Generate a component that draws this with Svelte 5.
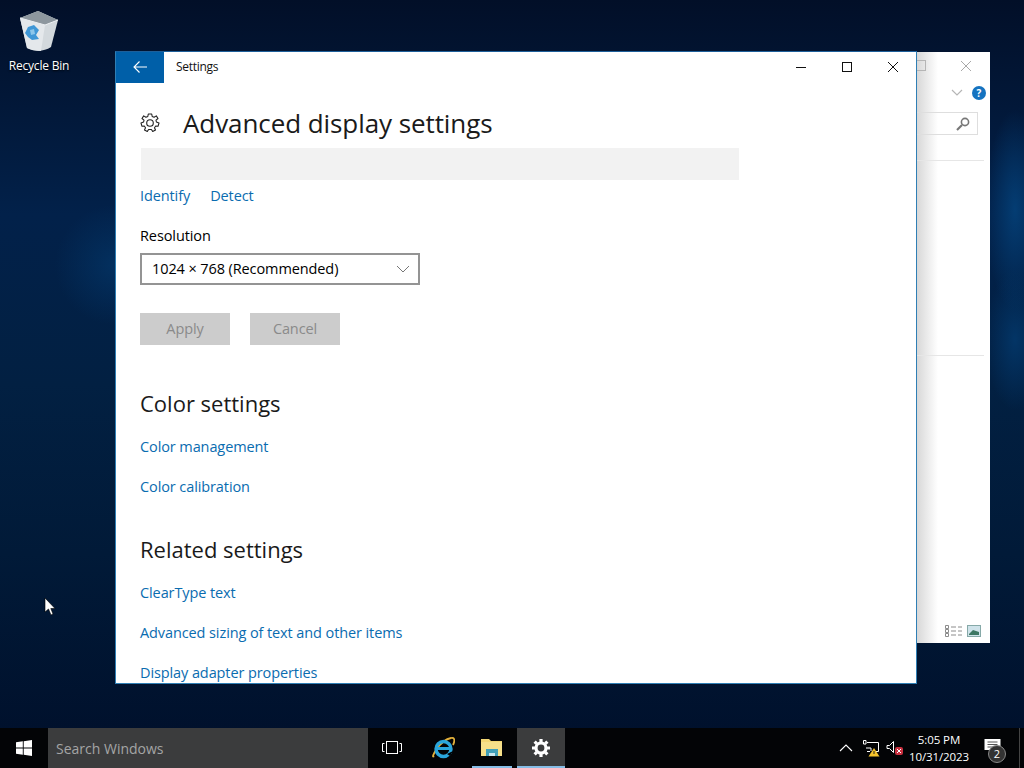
<script>
  const colorLinks = ["Color management", "Color calibration"];
  const relatedLinks = ["ClearType text", "Advanced sizing of text and other items", "Display adapter properties"];
</script>

<div class="desktop">
  <div class="desktop-icon">
    <svg width="44" height="44" viewBox="0 0 44 44">
      <path d="M3 9 L21 2 L41 11 L34 38 Q23 45 10 39 Z" fill="#d3d9dd" />
      <path d="M3 9 L21 2 L41 11 L28 16 Z" fill="#8d979e" />
      <path d="M3 9 L28 16 L41 11" stroke="#eef1f3" fill="none" />
      <path d="M28 16 L24 42 Q15 42 10 39 L3 9 Z" fill="#e4e8eb" />
      <path d="M11 18 L17 16 L22 21 L19 26 L22 30 L15 31 L11 28 L8 24 Z" fill="#3f97d6" />
      <path d="M13 21 L17 20 L18 25 L14 26 Z" fill="#8cc6ea" />
    </svg>
    <span>Recycle Bin</span>
  </div>

  <div class="back-window">
    <div class="back-shadow"></div>
    <div class="back-controls">
      <span class="back-max"></span>
      <svg class="back-close" width="12" height="12" viewBox="0 0 12 12"><path d="M1 1 L11 11 M11 1 L1 11" stroke="#a9a9a9" fill="none" /></svg>
    </div>
    <div class="back-ribbon">
      <svg width="12" height="8" viewBox="0 0 12 8"><path d="M1 1 L6 6 L11 1" stroke="#b5b5b5" stroke-width="1.2" fill="none" /></svg>
      <span class="help">?</span>
    </div>
    <div class="back-search">
      <svg width="16" height="16" viewBox="0 0 16 16"><circle cx="10" cy="6" r="3.6" stroke="#777" stroke-width="1.6" fill="none" /><path d="M7 9 L2 14" stroke="#777" stroke-width="2.2" /></svg>
    </div>
    <div class="back-rule one"></div>
    <div class="back-rule two"></div>
    <div class="back-views">
      <svg width="18" height="12" viewBox="0 0 18 12">
        <path d="M.5 .5h3v3h-3zM.5 4.500h3v3h-3zM.5 8.500h3v3h-3z" stroke="#8c8c8c" fill="#fff" />
        <path d="M6 2h5M13 2h4M6 6h5M13 6h4M6 10h5M13 10h4" stroke="#8c8c8c" />
      </svg>
      <svg width="14" height="12" viewBox="0 0 14 12">
        <rect x=".5" y=".5" width="13" height="11" fill="#cfe3ea" stroke="#86a9a8" />
        <path d="M2 9 L6 5 L12 7 V10 H2 Z" fill="#3d7763" />
      </svg>
    </div>
  </div>

  <div class="window">
    <header class="titlebar">
      <button class="back" aria-label="Back">
        <svg width="16" height="14" viewBox="0 0 16 14"><path d="M15 7 H2 M7.500 1.500 L2 7 L7.500 12.500" stroke="#fff" stroke-width="1.100" fill="none" /></svg>
      </button>
      <span class="app-title">Settings</span>
      <div class="controls">
        <span class="ctl"><svg width="12" height="12" viewBox="0 0 12 12"><path d="M1 6.500 H11" stroke="#111" /></svg></span>
        <span class="ctl"><svg width="12" height="12" viewBox="0 0 12 12"><rect x="1.500" y="1.500" width="9" height="9" stroke="#111" fill="none" /></svg></span>
        <span class="ctl"><svg width="12" height="12" viewBox="0 0 12 12"><path d="M1 1 L11 11 M11 1 L1 11" stroke="#111" fill="none" /></svg></span>
      </div>
    </header>

    <main class="page">
      <div class="page-head">
        <svg width="20" height="20" viewBox="0 0 20 20">
          <path d="M8.300 1 H11.700 L12.200 3.500 L14.100 4.300 L16.300 2.900 L18 5.500 L16 7.100 L16.400 9 L19 10 L18 13.300 L15.700 13 L14.500 14.700 L15.500 17 L12.700 18.500 L11.400 16.500 L8.600 16.500 L7.300 18.500 L4.500 17 L5.500 14.700 L4.300 13 L2 13.300 L1 10 L3.600 9 L4 7.100 L2 5.500 L3.700 2.900 L5.900 4.300 L7.800 3.500 Z" stroke="#222" stroke-width="1.100" fill="none" stroke-linejoin="round" />
          <circle cx="10" cy="10" r="3.300" stroke="#222" stroke-width="1.100" fill="none" />
        </svg>
        <h1>Advanced display settings</h1>
      </div>

      <div class="monitor-strip"></div>

      <div class="link-row">
        <a href="#identify">Identify</a>
        <a href="#detect">Detect</a>
      </div>

      <div class="field-label">Resolution</div>
      <div class="select">
        <span>1024 × 768 (Recommended)</span>
        <svg width="14" height="8" viewBox="0 0 14 8"><path d="M1 1 L7 7 L13 1" stroke="#777" fill="none" /></svg>
      </div>

      <div class="buttons">
        <button disabled>Apply</button>
        <button disabled>Cancel</button>
      </div>

      <h2 class="first">Color settings</h2>
      {#each colorLinks as link}
        <a class="link" href="#color">{link}</a>
      {/each}

      <h2>Related settings</h2>
      {#each relatedLinks as link}
        <a class="link" href="#related">{link}</a>
      {/each}
    </main>
  </div>

  <svg class="cursor" width="12" height="19" viewBox="0 0 12 19">
    <path d="M1 1 V15 L4.500 12 L7 18 L9 17 L6.800 11.500 H11 Z" fill="#fff" stroke="#000" stroke-width=".6" />
  </svg>

  <footer class="taskbar">
    <div class="start">
      <svg width="16" height="16" viewBox="0 0 16 16"><path d="M0 2.300 L6.800 1.300 V7.500 H0 Z M7.700 1.200 L16 0 V7.500 H7.700 Z M0 8.400 H6.800 V14.700 L0 13.700 Z M7.700 8.400 H16 V16 L7.700 14.800 Z" fill="#fff" /></svg>
    </div>
    <div class="search">Search Windows</div>
    <div class="task-item">
      <svg width="20" height="14" viewBox="0 0 20 14">
        <rect x="4.500" y=".5" width="11" height="12" stroke="#fff" fill="none" />
        <path d="M2.500 2.500 H.5 V10.500 H2.500 M17.500 2.500 H19.500 V10.500 H17.500" stroke="#fff" fill="none" />
      </svg>
    </div>
    <div class="task-item ie">
      <svg width="24" height="24" viewBox="0 0 24 24">
        <path d="M3 20 C-1 24 8 4 20 2 C24 1 24 5 22 9" stroke="#e3b13c" stroke-width="1.800" fill="none" />
        <circle cx="12.500" cy="13" r="7.500" fill="none" stroke="#2aa6dc" stroke-width="3.400" />
        <path d="M5.500 12.500 H20" stroke="#2aa6dc" stroke-width="3" />
        <path d="M16 18 L22 15 L19 20 Z" fill="#000" />
      </svg>
    </div>
    <div class="task-item open folder">
      <svg width="22" height="20" viewBox="0 0 22 20">
        <path d="M0 1 H8 L10 3 H21 V18 H0 Z" fill="#f3d774" />
        <path d="M0 4 H21 V18 H0 Z" fill="#f6e08a" />
        <path d="M5 18 V11 H17 V18 Z" fill="#41a0b8" />
        <path d="M8 15 H14 V18 H8 Z" fill="#cbe6ec" />
      </svg>
    </div>
    <div class="task-item open active">
      <svg width="20" height="20" viewBox="0 0 20 20">
        <circle cx="10" cy="10" r="5" fill="none" stroke="#fff" stroke-width="3.200" />
        <path d="M10 1 V4 M10 16 V19 M1 10 H4 M16 10 H19 M3.600 3.600 L5.700 5.700 M14.300 14.300 L16.400 16.400 M3.600 16.400 L5.700 14.300 M14.300 5.700 L16.400 3.600" stroke="#fff" stroke-width="3.200" />
      </svg>
    </div>

    <div class="tray">
      <svg class="chev" width="14" height="8" viewBox="0 0 14 8"><path d="M1 7 L7 1 L13 7" stroke="#fff" stroke-width="1.100" fill="none" /></svg>
      <svg class="net" width="18" height="18" viewBox="0 0 18 18">
        <path d="M1.500 1.500 H4 V5 H1.500 Z M5 3.500 H16.500 V12.500 H11 M8 12.500 H5 M4 9 H9 V12" stroke="#fff" fill="none" />
        <path d="M12 9 L17.500 17.500 H6.500 Z" fill="#f5c32c" />
        <path d="M12 12 V15" stroke="#222" />
      </svg>
      <svg class="vol" width="18" height="16" viewBox="0 0 18 16">
        <path d="M1 5.500 H3.500 L7.500 1.500 V12.500 L3.500 8.500 H1 Z" stroke="#fff" fill="none" />
        <rect x="9" y="7" width="8" height="8" rx="2" fill="#c9303f" />
        <path d="M11 9 L15 13 M15 9 L11 13" stroke="#fff" />
      </svg>
      <div class="clock">
        <span>5:05 PM</span>
        <span>10/31/2023</span>
      </div>
      <div class="notify">
        <svg width="17" height="15" viewBox="0 0 16 15">
          <path d="M0 0 H16 V11 H8 L5 14 V11 H0 Z" fill="#fff" />
          <path d="M3 3 H13 M3 5.500 H13 M3 8 H13" stroke="#555" />
        </svg>
        <span class="badge">2</span>
      </div>
      <div class="show-desktop"></div>
    </div>
  </footer>
</div>

<style>
  :global(body) {
    margin: 0;
    font-family: "Open Sans", "Noto Sans", sans-serif;
  }

  .desktop {
    position: relative;
    width: 1024px;
    height: 768px;
    overflow: hidden;
    background:
      radial-gradient(ellipse 60px 60px at 115px 265px, #03305f 0%, rgba(3, 48, 95, 0) 100%),
      radial-gradient(ellipse 30px 100px at 1015px 210px, #043d73 0%, rgba(4, 61, 115, 0) 100%),
      radial-gradient(ellipse 30px 70px at 1015px 340px, #033566 0%, rgba(3, 53, 102, 0) 100%),
      linear-gradient(180deg, #020f28 0%, #02214a 28%, #022042 50%, #011a38 72%, #000f2a 100%);
  }

  /* desktop icon */
  .desktop-icon {
    position: absolute;
    left: 0;
    top: 9px;
    width: 78px;
    display: flex;
    flex-direction: column;
    align-items: center;
    color: #fff;
    font-size: 12px;
    line-height: 16px;
  }

  .desktop-icon span {
    margin-top: 5px;
    letter-spacing: -0.2px;
    text-shadow: 0 1px 2px #000;
  }

  /* window behind */
  .back-window {
    position: absolute;
    left: 900px;
    top: 52px;
    width: 90px;
    height: 591px;
    background: #fff;
  }

  .back-shadow {
    position: absolute;
    left: 16px;
    top: 0;
    bottom: 0;
    width: 22px;
    background: linear-gradient(90deg, #d6d6d6, #ffffff);
  }

  .back-controls {
    position: absolute;
    left: 16px;
    top: 8px;
    width: 58px;
    height: 12px;
  }

  .back-max {
    position: absolute;
    left: 0;
    top: 0;
    width: 9px;
    height: 9px;
    border: 1px solid #b5b5b5;
    border-left: none;
  }

  .back-close {
    position: absolute;
    right: 2px;
    top: 0;
  }

  .back-ribbon {
    position: absolute;
    left: 51px;
    top: 34px;
    display: flex;
    align-items: center;
    gap: 9px;
  }

  .help {
    width: 14px;
    height: 14px;
    border-radius: 50%;
    background: #1573c0;
    color: #fff;
    font-size: 10px;
    font-weight: 700;
    line-height: 14px;
    text-align: center;
  }

  .back-search {
    position: absolute;
    left: 16px;
    top: 60px;
    width: 55px;
    height: 21px;
    border: 1px solid #dedede;
    border-left: none;
    display: flex;
    justify-content: flex-end;
    align-items: center;
    padding-right: 6px;
  }

  .back-rule {
    position: absolute;
    left: 16px;
    width: 68px;
    height: 1px;
    background: #e6e6e6;
  }

  .back-rule.one {
    top: 108px;
  }

  .back-rule.two {
    top: 303px;
  }

  .back-views {
    position: absolute;
    left: 45px;
    top: 573px;
    display: flex;
    gap: 4px;
    align-items: center;
  }

  /* settings window */
  .window {
    position: absolute;
    left: 115px;
    top: 51px;
    width: 802px;
    height: 633px;
    box-sizing: border-box;
    border: 1px solid #2f7fb5;
    border-top-color: #1d5f9a;
    background: #fff;
    overflow: hidden;
    display: flex;
    flex-direction: column;
  }

  .titlebar {
    flex: none;
    height: 31px;
    display: flex;
    align-items: flex-start;
  }

  .back {
    width: 48px;
    height: 31px;
    padding: 0 0 2px;
    border: none;
    background: #005fa8;
    display: flex;
    align-items: center;
    justify-content: center;
  }

  .app-title {
    margin-left: 12px;
    font-size: 12px;
    letter-spacing: -0.3px;
    line-height: 29px;
    color: #111;
  }

  .controls {
    margin-left: auto;
    display: flex;
  }

  .ctl {
    width: 46px;
    height: 29px;
    display: flex;
    align-items: center;
    justify-content: center;
  }

  .page {
    padding: 0 24px;
    flex: 1;
    min-height: 0;
    color: #000;
    font-size: 14.5px;
    letter-spacing: -0.1px;
    line-height: 20px;
  }

  .page-head {
    height: 48px;
    margin-top: 16px;
    display: flex;
    align-items: center;
    gap: 23px;
  }

  .page-head svg {
    flex: none;
  }

  h1 {
    margin: 0;
    font-size: 26px;
    font-weight: 400;
    letter-spacing: -0.08px;
    line-height: 36px;
    color: #1a1a1a;
  }

  .monitor-strip {
    margin: 1px 0 0 1px;
    width: 598px;
    height: 32px;
    background: #f2f2f2;
  }

  .link-row {
    margin-top: 6px;
    display: flex;
    gap: 20px;
    height: 20px;
  }

  a {
    color: #0a6cb0;
    text-decoration: none;
  }

  .field-label {
    margin-top: 20px;
    height: 20px;
  }

  .select {
    margin-top: 7px;
    width: 280px;
    height: 32px;
    box-sizing: border-box;
    border: 2px solid #949494;
    padding: 0 8px 0 10px;
    display: flex;
    align-items: center;
    justify-content: space-between;
  }

  .buttons {
    margin-top: 28px;
    display: flex;
    gap: 20px;
  }

  .buttons button {
    width: 90px;
    height: 32px;
    padding: 0 0 0;
    border: none;
    background: #cccccc;
    color: #8a8a8a;
    font: inherit;
    letter-spacing: inherit;
  }

  h2 {
    margin: 37px 0 19px;
    font-size: 22px;
    font-weight: 400;
    letter-spacing: 0;
    line-height: 30px;
    color: #1a1a1a;
  }

  h2.first {
    margin-top: 43px;
  }

  .link {
    display: block;
    height: 20px;
    margin-bottom: 20px;
  }

  .cursor {
    position: absolute;
    left: 44px;
    top: 597px;
  }

  /* taskbar */
  .taskbar {
    position: absolute;
    left: 0;
    right: 0;
    bottom: 0;
    height: 40px;
    background: #030406;
    display: flex;
    color: #fff;
  }

  .start {
    width: 48px;
    display: flex;
    align-items: center;
    justify-content: center;
  }

  .search {
    width: 320px;
    background: #3b3c3d;
    color: #a4a5a5;
    font-size: 14px;
    line-height: 41px;
    padding-left: 8px;
    box-sizing: border-box;
  }

  .task-item {
    position: relative;
    width: 48px;
    display: flex;
    align-items: center;
    justify-content: center;
  }

  .task-item.ie {
    margin-left: 3px;
  }

  .task-item.folder {
    margin-left: 1px;
  }

  .task-item.active {
    margin-left: 1px;
    background: #3b3c3d;
  }

  .task-item.open::after {
    content: "";
    position: absolute;
    left: 4px;
    right: 4px;
    bottom: 0;
    height: 2px;
    background: #86bde6;
  }

  .task-item.active::after {
    left: 0;
    right: 0;
  }

  .tray {
    margin-left: auto;
    display: flex;
    align-items: center;
  }

  .chev {
    margin-right: 9px;
  }

  .net {
    margin-right: 6px;
  }

  .vol {
    margin-right: 2px;
  }

  .clock {
    width: 66px;
    display: flex;
    flex-direction: column;
    align-items: center;
    font-size: 11.5px;
    letter-spacing: -0.1px;
    line-height: 17px;
    color: #fff;
  }

  .notify {
    position: relative;
    width: 47px;
    height: 40px;
    display: flex;
    align-items: center;
    justify-content: center;
    padding: 0 7px 4px 0;
    box-sizing: border-box;
  }

  .badge {
    position: absolute;
    left: 16px;
    top: 17px;
    width: 16px;
    height: 16px;
    border-radius: 50%;
    background: #333;
    border: 1px solid #888;
    color: #fff;
    font-size: 11px;
    line-height: 16px;
    text-align: center;
  }

  .show-desktop {
    width: 5px;
    height: 40px;
    border-left: 1px solid #444;
    box-sizing: border-box;
  }
</style>
